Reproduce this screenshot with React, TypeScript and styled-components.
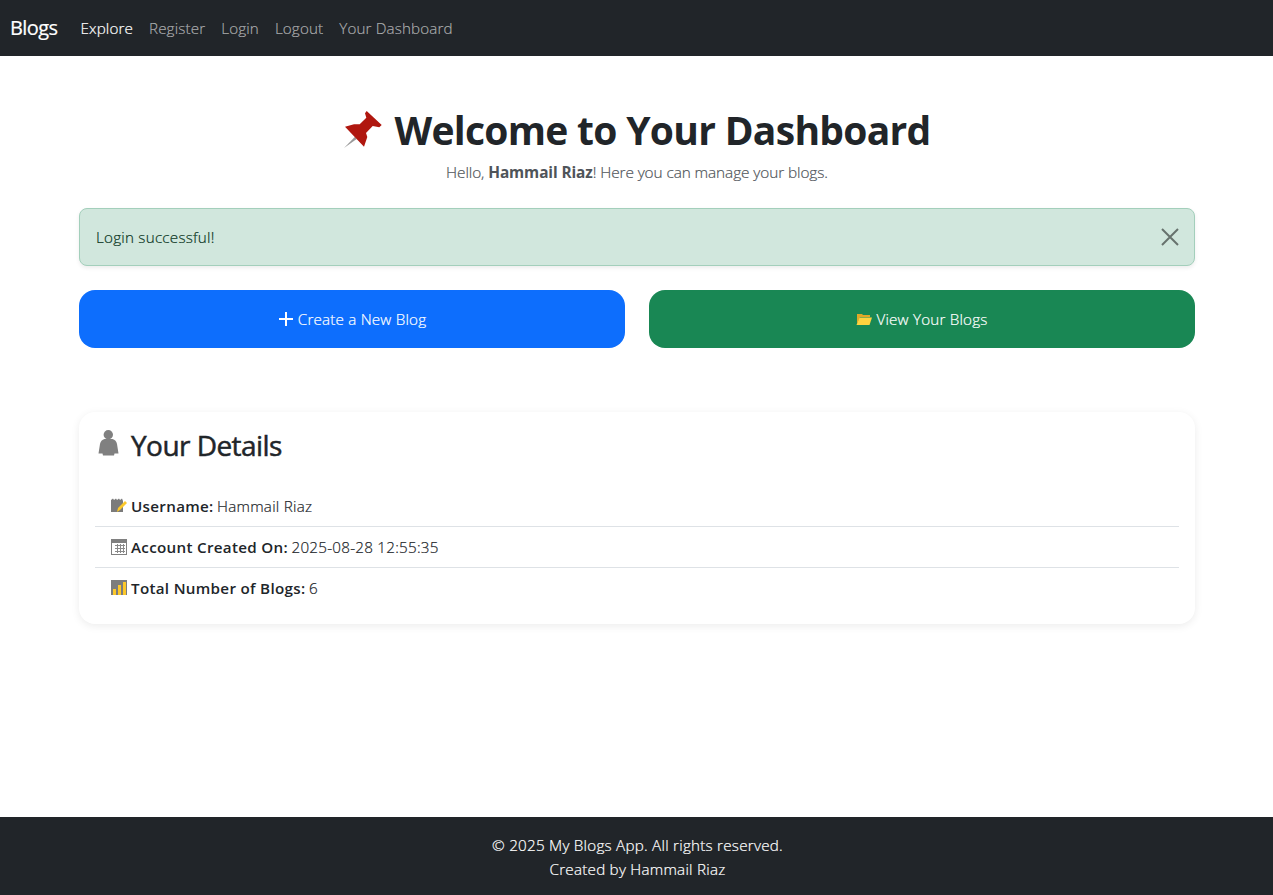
import React from "react";
import styled, { createGlobalStyle } from "styled-components";

const Global = createGlobalStyle`
  * { box-sizing: border-box; }
  html, body { margin: 0; padding: 0; }
  body {
    font-family: "Open Sans", "Liberation Sans", sans-serif;
    font-weight: 300;
    font-size: 16px;
    line-height: 24px;
    color: #212529;
    background: #fff;
    -webkit-text-stroke: 0.2px;
  }
`;

const Page = styled.div`
  min-height: 895px;
  display: flex;
  flex-direction: column;
`;

const Navbar = styled.nav`
  height: 56px;
  background: #212529;
  display: flex;
  align-items: center;
  padding: 0 10px;
`;

const Brand = styled.a`
  font-size: 20px;
  line-height: 30px;
  color: #fff;
  font-weight: 400;
  margin-right: 15px;
  letter-spacing: -0.6px;
`;

const NavLinks = styled.div`
  display: flex;
  align-items: center;
`;

const NavLink = styled.a<{ $active?: boolean }>`
  padding: 8px;
  font-size: 15.2px;
  color: ${(p) => (p.$active ? "#fff" : "rgba(255,255,255,0.55)")};
  letter-spacing: 0.14px;
`;

const Main = styled.main`
  width: 1140px;
  margin: 0 auto;
  padding: 48px 12px 0;
  flex: 1;
  position: relative;
  left: 0.5px;
`;

const Hero = styled.header`
  text-align: center;
  margin-bottom: 23px;
`;

const Title = styled.h1`
  margin: 0 0 7px;
  padding-top: 2px;
  font-size: 39px;
  line-height: 48px;
  font-weight: 700;
  display: flex;
  justify-content: center;
  align-items: center;
  gap: 11px;
  letter-spacing: -0.7px;
  -webkit-text-stroke: 0;
`;

const Sub = styled.p`
  margin: 0;
  font-size: 15.4px;
  color: #4f5459;
  letter-spacing: -0.1px;
  strong { font-weight: 700; -webkit-text-stroke: 0; }
`;

const Alert = styled.div`
  height: 58px;
  display: flex;
  align-items: center;
  justify-content: space-between;
  padding: 0 15px 0 16px;
  background: #d1e7dd;
  border: 1px solid #a3cfbb;
  border-radius: 8px;
  color: #0a3622;
  font-size: 15.2px;
  letter-spacing: 0.24px;
  box-shadow: 0 2px 4px rgba(0,0,0,0.075);
  margin-bottom: 24px;
`;

const CloseBtn = styled.button`
  border: 0;
  background: none;
  padding: 0;
  width: 18px;
  height: 18px;
  display: flex;
  color: #000;
  opacity: 0.5;
`;

const Actions = styled.div`
  display: grid;
  grid-template-columns: 1fr 1fr;
  gap: 24px;
  margin-bottom: 64px;
`;

const ActionBtn = styled.a<{ $bg: string }>`
  height: 58px;
  border-radius: 16px;
  background: ${(p) => p.$bg};
  color: #fff;
  display: flex;
  align-items: center;
  justify-content: center;
  gap: 4px;
  font-size: 15.2px;
  letter-spacing: 0.2px;
`;

const Card = styled.section`
  border-radius: 16px;
  padding: 16px;
  background: #fff;
  box-shadow: 0 2px 8px rgba(0,0,0,0.08);
`;

const CardTitle = styled.h3`
  margin: 0 0 24px;
  font-size: 28px;
  line-height: 34px;
  font-weight: 500;
  display: flex;
  align-items: center;
  gap: 12px;
  padding-left: 3px;
  letter-spacing: -0.55px;
  -webkit-text-stroke: 0.5px;
`;

const List = styled.ul`
  list-style: none;
  margin: 0;
  padding: 0;
`;

const Item = styled.li`
  height: 41px;
  padding: 0 16px;
  display: flex;
  align-items: center;
  font-size: 15.2px;
  letter-spacing: 0.25px;
  border-bottom: 1px solid #dee2e6;
  &:last-child { border-bottom: 0; height: 40px; }
  strong { font-weight: 600; margin: 0 3.5px 0 4px; letter-spacing: 0.3px; -webkit-text-stroke: 0; }
`;

const Footer = styled.footer`
  height: 78px;
  background: #212529;
  color: #fff;
  text-align: center;
  padding: 16px 0 16px 2px;
  font-size: 15.2px;
  letter-spacing: 0.25px;
`;

const Line = styled.div``;

const Pin = () => (
  <svg width="40" height="40" viewBox="0 0 40 40">
    <path d="M1 38 L12 26.7 L13.7 29 Z" fill="#9a9a9a" />
    <path d="M23.7 1 L38.7 15 L36.3 17.3 L29.7 16 L23 23 L24.3 27 L21 36.7 L2 16.7 L11 14.3 L16.7 14.3 L23.3 7.7 L22 3.3 Z" fill="#b0170f" />
  </svg>
);

const Person = () => (
  <svg width="21" height="30" viewBox="0 0 21 30">
    <circle cx="10.3" cy="4.7" r="4.7" fill="#808080" />
    <path d="M6.5 9 L14.5 9 C17 9.5 18.5 11.5 19 14 L20.5 23.5 L16.5 23.5 L16 25.5 L5 25.5 L4.5 23.5 L0.5 23.5 L2 14 C2.5 11.5 4 9.5 6.5 9 Z" fill="#808080" />
  </svg>
);

const Memo = () => (
  <svg width="16" height="16" viewBox="0 0 16 16">
    <path d="M0 2 L2 0.5 L3 2 L5 0.5 L6 2 L8 0.5 L9 2 L11 0.5 L12 3 L12 14 L0 14 Z" fill="#7b7b7b" />
    <path d="M6 14 L7 10 L14 3 L16 5 L9 12 Z" fill="#fcc82a" />
  </svg>
);

const Calendar = () => (
  <svg width="16" height="16" viewBox="0 0 16 16">
    <rect x="0" y="0" width="16" height="16" fill="#808080" />
    <rect x="1" y="4" width="14" height="11" fill="#fff" />
    <path d="M4 6h10v1H4zM4 9h10v1H4zM4 12h10v1H4z" fill="#8a8a8a" />
    <path d="M6 5h1v9H6zM9 5h1v9H9zM12 5h1v9h-1z" fill="#8a8a8a" />
  </svg>
);

const Chart = () => (
  <svg width="16" height="16" viewBox="0 0 16 16">
    <rect x="0" y="0" width="16" height="15" fill="#7d7d7d" />
    <rect x="2" y="9" width="3" height="6" fill="#fcc82a" />
    <rect x="7" y="5" width="3" height="10" fill="#fcc82a" />
    <rect x="12" y="2" width="3" height="13" fill="#fcc82a" />
  </svg>
);

const Folder = () => (
  <svg width="16" height="12" viewBox="0 0 16 12">
    <path d="M1 1 H6 L7 2 H14 V4 H4 L1 11 Z" fill="#e0a828" />
    <path d="M3.5 4.5 H16 L13.5 12 H0.5 Z" fill="#ffd23f" />
  </svg>
);

const Plus = () => (
  <svg width="16" height="16" viewBox="0 0 16 16">
    <path d="M8 1v14M1 8h14" stroke="#fff" strokeWidth="2" fill="none" />
  </svg>
);

const Close = () => (
  <svg width="18" height="18" viewBox="0 0 18 18">
    <path d="M1 1 L17 17 M17 1 L1 17" stroke="currentColor" strokeWidth="2" fill="none" />
  </svg>
);

export default function App() {
  return (
    <Page>
      <Global />
      <Navbar>
        <Brand>Blogs</Brand>
        <NavLinks>
          <NavLink $active>Explore</NavLink>
          <NavLink>Register</NavLink>
          <NavLink>Login</NavLink>
          <NavLink>Logout</NavLink>
          <NavLink>Your Dashboard</NavLink>
        </NavLinks>
      </Navbar>
      <Main>
        <Hero>
          <Title><Pin />Welcome to Your Dashboard</Title>
          <Sub>Hello, <strong>Hammail Riaz</strong>! Here you can manage your blogs.</Sub>
        </Hero>
        <Alert>
          Login successful!
          <CloseBtn><Close /></CloseBtn>
        </Alert>
        <Actions>
          <ActionBtn $bg="#0d6efd"><Plus />Create a New Blog</ActionBtn>
          <ActionBtn $bg="#198754"><Folder />View Your Blogs</ActionBtn>
        </Actions>
        <Card>
          <CardTitle><Person />Your Details</CardTitle>
          <List>
            <Item><Memo /><strong>Username:</strong>Hammail Riaz</Item>
            <Item><Calendar /><strong>Account Created On:</strong>2025-08-28 12:55:35</Item>
            <Item><Chart /><strong>Total Number of Blogs:</strong>6</Item>
          </List>
        </Card>
      </Main>
      <Footer>
        <Line>© 2025 My Blogs App. All rights reserved.</Line>
        <Line>Created by Hammail Riaz</Line>
      </Footer>
    </Page>
  );
}
